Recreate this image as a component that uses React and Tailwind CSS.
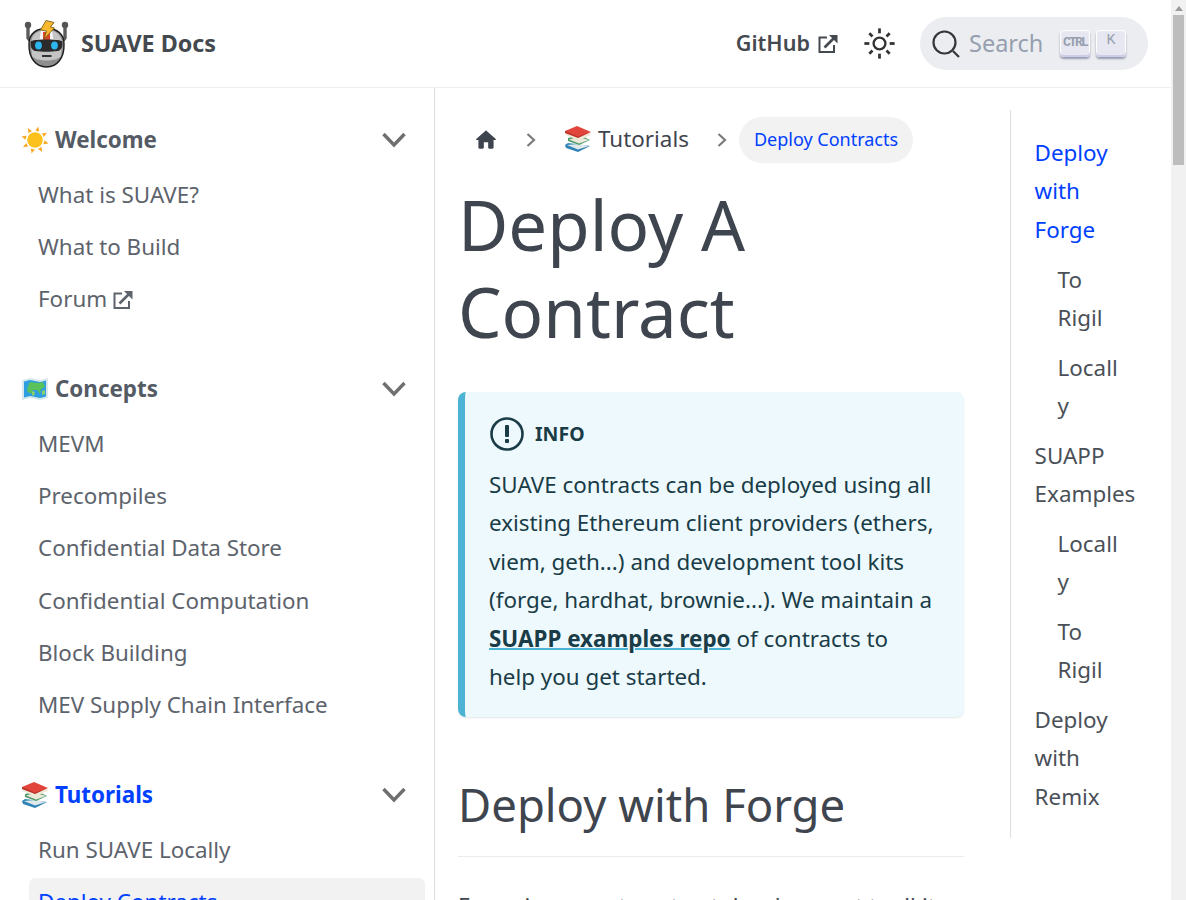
const sections = [
  { title: "Welcome", icon: <SunEmoji />, items: ["What is SUAVE?", "What to Build", "Forum"] },
  {
    title: "Concepts",
    icon: <MapEmoji />,
    items: ["MEVM", "Precompiles", "Confidential Data Store", "Confidential Computation", "Block Building", "MEV Supply Chain Interface"],
  },
  { title: "Tutorials", icon: <BooksEmoji />, active: true, items: ["Run SUAVE Locally", "Deploy Contracts"] },
];

function SunEmoji() {
  const rays = [0, 45, 90, 135, 180, 225, 270, 315];
  return (
    <svg width="28" height="28" viewBox="0 0 28 28">
      {rays.map((r) => (
        <path key={r} d="M12 4.8 L14 0 L16 4.8Z" fill="#f8a825" transform={`rotate(${r + 14} 14 14)`} />
      ))}
      <circle cx="14" cy="14" r="7.8" fill="#fdc11e" />
    </svg>
  );
}

function MapEmoji() {
  return (
    <svg width="28" height="28" viewBox="0 0 28 28">
      <path d="M1 5 L9 3 L19 5 L27 3 L27 23 L19 25 L9 23 L1 25Z" fill="#d7e8ee" />
      <path d="M3 6.5 L9 5 L19 7 L25 5.5 L25 21.5 L19 23 L9 21 L3 22.5Z" fill="#2f9ee0" />
      <path d="M9 7 L17 8 L22 7 L24 12 L20 14 L19 19 L16 15 L12 15 L10 19 L6 16 L7 11Z" fill="#59c25a" />
      <path d="M11 16 L14 17 L13 21 L11 20Z M21 16 L24 15 L24 19 L21 20Z" fill="#8bd06a" />
    </svg>
  );
}

function BooksEmoji() {
  return (
    <svg width="28" height="28" viewBox="0 0 28 28">
      <path d="M1 20 L4 18 L26 21 L14 27 L2 23Z" fill="#2f84b5" />
      <path d="M3 20 L14 24.5 L25 21 L14 19Z" fill="#dfe9ea" />
      <path d="M4 13 L16 10 L26 15 L15 20 L4 16Z" fill="#4f9d6b" />
      <path d="M5 14.5 L15 18.5 L25 15 L15 12Z" fill="#ece8da" />
      <path d="M1 6 L13 1 L27 7 L14 13 L2 9Z" fill="#e2453b" />
      <path d="M1.5 7.5 L14 12.5 L26.5 7.5 L26.5 10 L14 15.5 L1.5 10Z" fill="#f0e9d8" />
      <path d="M1 6 L14 11.5 L27 7 L14 13 L1 8Z" fill="#b9352d" />
    </svg>
  );
}

function ExternalIcon({ size = 20 }) {
  return (
    <svg width={size} height={size} viewBox="0 0 20 20" fill="none" stroke="currentColor">
      <path d="M9 3.5 H1.5 V18 H16 V11" strokeWidth="2" />
      <path d="M6.5 13.5 L17 3" strokeWidth="2.6" />
      <path d="M11 1 H19.5 V9.5Z" fill="currentColor" stroke="none" />
    </svg>
  );
}

function RobotLogo() {
  return (
    <svg width="46" height="48" viewBox="0 0 46 48">
      <path d="M4 6 L4 18 L8 23 M41 6 L41 18 L37 23" fill="none" stroke="#5c5c5c" strokeWidth="3.4" />
      <circle cx="4" cy="5" r="3.2" fill="#555" />
      <circle cx="41" cy="5" r="3.2" fill="#555" />
      <path d="M5 24 C5 13 13 8.5 22.5 8.5 C32 8.5 40 13 40 24 C40.5 38 33 47 22.5 47 C12 47 4.5 38 5 24Z" fill="#8f8f8f" stroke="#1d1d1d" strokeWidth="1.4" />
      <path d="M7 24 C7 14 14 10 22.5 10 C31 10 38 14 38 24 L37 36 C33 42 12 42 8 36Z" fill="#c4c4c4" />
      <path d="M17 10 H28 L29.5 20 H15.5Z" fill="#f5f5f5" />
      <path d="M19 12 H26 L26 20 H19Z" fill="#d9432a" />
      <path d="M7 21 C13 19 32 19 38 21 C39 25 38 30 34 31 C27 32 18 32 11 31 C7 30 6 25 7 21Z" fill="#2b2b2b" />
      <ellipse cx="14.5" cy="25.5" rx="3.4" ry="4" fill="#2cb6f0" />
      <ellipse cx="30.5" cy="25.5" rx="3.4" ry="4" fill="#2cb6f0" />
      <rect x="18" y="35" width="9.5" height="2" fill="#333" />
      <path d="M22 0.5 L30 2.5 L26.5 7 L30.5 8 L20 19 L22.5 11 L16.5 10Z" fill="#f9b92e" stroke="#7b5e16" strokeWidth="0.9" />
    </svg>
  );
}

function SidebarSection({ section }) {
  return (
    <div className="mb-[39.6px]">
      <div className="flex h-[52px] items-center justify-between pl-[21px] pr-[28px]">
        <div className={`flex items-center gap-[6px] text-[22.4px] font-bold ${section.active ? "text-[#0040ff]" : "text-[#555b65]"}`}>
          {section.icon}
          {section.title}
        </div>
        <svg width="24" height="16" viewBox="0 0 24 16" fill="none" stroke="#6f6f6f" strokeWidth="3.4">
          <path d="M1.5 2 L12 13 L22.5 2" />
        </svg>
      </div>
      <div className="mt-[5px] flex flex-col gap-[4.25px] pl-[29px] pr-[9px]">
        {section.items.map((item) => (
          <div
            key={item}
            className={`flex h-12 shrink-0 items-center gap-[6px] rounded-md px-[9px] ${
              item === "Deploy Contracts" ? "bg-[#f2f2f2] text-[#0040ff]" : "text-[#5d636c]"
            }`}
          >
            {item}
            {item === "Forum" && <ExternalIcon />}
          </div>
        ))}
      </div>
    </div>
  );
}

function TocItem({ children, active, nested }) {
  return <div className={`mb-[11.3px] ${nested ? "pl-[23px]" : ""} ${active ? "text-[#0040ff]" : "text-[#4a5058]"}`}>{children}</div>;
}

export default function App() {
  return (
    <div className="flex h-[900px] overflow-hidden bg-white font-['Noto_Sans',sans-serif] text-[22.4px] leading-[38.3px] text-[#3f454e]">
      <div className="flex w-[1171px] shrink-0 flex-col">
        <header className="flex h-[88px] shrink-0 items-center border-b border-[#efefef] pl-[24px] pr-[23px]">
          <RobotLogo />
          <span className="ml-[11px] text-[23.3px] font-bold text-[#444950]">SUAVE Docs</span>
          <div className="ml-auto flex items-center">
            <span className="text-[21.6px] font-semibold text-[#444950]">GitHub</span>
            <span className="ml-[8px] text-[#444950]">
              <ExternalIcon />
            </span>
            <svg className="ml-[25px]" width="33" height="33" viewBox="0 0 24 24" fill="#333">
              <circle cx="12" cy="12" r="4.3" fill="none" stroke="#333" strokeWidth="1.7" />
              <rect x="11" y="1" width="2" height="3.6" />
              <rect x="11" y="19.4" width="2" height="3.6" />
              <rect x="1" y="11" width="3.6" height="2" />
              <rect x="19.4" y="11" width="3.6" height="2" />
              <path d="M3.9 5.3 L5.3 3.9 L7.6 6.2 L6.2 7.6Z M18.7 20.1 L20.1 18.7 L17.8 16.4 L16.4 17.8Z M20.1 5.3 L18.7 3.9 L16.4 6.2 L17.8 7.6Z M5.3 20.1 L3.9 18.7 L6.2 16.4 L7.6 17.8Z" />
            </svg>
            <div className="ml-[24px] flex h-[53px] w-[228px] items-center rounded-full bg-[#ebedf0] pl-[12px]">
              <svg width="28" height="28" viewBox="0 0 28 28" fill="none" stroke="#33363a" strokeWidth="2.2">
                <circle cx="12.5" cy="12.5" r="11" />
                <path d="M21 21 L27 27" />
              </svg>
              <span className="ml-[9px] w-[91px] text-[23.5px] text-[#969faf]">Search</span>
              <kbd className="flex h-[27px] w-[30px] items-center justify-center rounded-[4px] bg-[#e6e7f0] font-['Liberation_Mono',monospace] text-[13px] font-bold tracking-[-1.8px] text-[#969faf] shadow-[inset_0_-2px_0_#cdcde6,inset_0_0_1px_1px_#fff,0_2px_2px_rgba(30,35,90,0.4)]">
                CTRL
              </kbd>
              <kbd className="ml-[6px] flex h-[27px] w-[30px] items-start justify-center rounded-[4px] bg-[#e6e7f0] text-[15px] leading-[22px] text-[#969faf] shadow-[inset_0_-2px_0_#cdcde6,inset_0_0_1px_1px_#fff,0_2px_2px_rgba(30,35,90,0.4)]">
                K
              </kbd>
            </div>
          </div>
        </header>

        <div className="flex min-h-0 flex-1">
          <aside className="w-[435px] shrink-0 overflow-hidden border-r border-[#dadde1] pt-[26px]">
            {sections.map((s) => (
              <SidebarSection key={s.title} section={s} />
            ))}
          </aside>

          <main className="w-[575px] shrink-0 overflow-hidden pl-[23px] pr-[46px] pt-[29px]">
            <nav className="flex h-[46px] items-center">
              <svg className="ml-[15px]" width="26" height="26" viewBox="0 0 24 24" fill="#3f454e">
                <path d="M10 19v-5h4v5c0 .55.45 1 1 1h3c.55 0 1-.45 1-1v-7h1.7c.46 0 .68-.57.33-.87L12.67 3.6c-.38-.34-.96-.34-1.34 0l-8.36 7.53c-.34.3-.13.87.33.87H5v7c0 .55.45 1 1 1h3c.55 0 1-.45 1-1z" />
              </svg>
              <svg className="ml-[27px]" width="10" height="16" viewBox="0 0 10 16" fill="none" stroke="#7a7a7a" strokeWidth="2.2">
                <path d="M1.5 2 L8 8 L1.5 14" />
              </svg>
              <span className="ml-[28px] flex items-center gap-[6px] pb-[2px]">
                <BooksEmoji />
                Tutorials
              </span>
              <svg className="ml-[28px]" width="10" height="16" viewBox="0 0 10 16" fill="none" stroke="#7a7a7a" strokeWidth="2.2">
                <path d="M1.5 2 L8 8 L1.5 14" />
              </svg>
              <span className="ml-[12px] flex h-[46px] items-center rounded-full bg-[#f2f2f2] px-[15px] pb-[2px] text-[18px] text-[#0040ff]">
                Deploy Contracts
              </span>
            </nav>

            <h1 className="mt-[18px] text-[69px] leading-[87px] text-[#3f454e]">
              Deploy A
              <br />
              Contract
            </h1>

            <div className="mt-[37px] rounded-lg border-l-[7px] border-[#4cb3d4] bg-[#eef9fd] pb-[21px] pl-[24px] pr-[16px] pt-[22px] text-[#193c47] shadow-[0_1px_2px_0_rgba(0,0,0,0.1)]">
              <div className="flex h-[40px] items-center gap-[10px] text-[19.5px] font-bold">
                <svg width="36" height="36" viewBox="0 0 36 36" fill="none" stroke="#193c47" strokeWidth="2.6">
                  <circle cx="18" cy="18" r="15.5" />
                  <rect x="16" y="9" width="4" height="12" fill="#193c47" stroke="none" rx="1" />
                  <rect x="16" y="23" width="4" height="4" fill="#193c47" stroke="none" rx="1" />
                </svg>
                INFO
              </div>
              <p className="mt-[12px] leading-[38.4px]">
                SUAVE contracts can be deployed using all
                <br />
                existing Ethereum client providers (ethers,
                <br />
                viem, geth...) and development tool kits
                <br />
                (forge, hardhat, brownie...). We maintain a
                <br />
                <a className="font-bold underline decoration-[#4cb3d4] decoration-2">SUAPP examples repo</a> of contracts to
                <br />
                help you get started.
              </p>
            </div>

            <h2 className="mt-[56px] text-[45.5px] leading-[62px] text-[#3f454e]">Deploy with Forge</h2>
            <div className="mt-[21px] border-b border-[#ebebeb]" />
            <p className="mt-[30px]">Forge is a smart contract development toolkit</p>
          </main>

          <div className="min-w-0 flex-1 pt-[22px]">
            <div className="h-[728px] border-l border-[#dadde1] pl-[23.6px] pt-[24px] leading-[38.4px]">
              <TocItem active>
                Deploy
                <br />
                with
                <br />
                Forge
              </TocItem>
              <TocItem nested>
                To
                <br />
                Rigil
              </TocItem>
              <TocItem nested>
                Locall
                <br />y
              </TocItem>
              <TocItem>
                SUAPP
                <br />
                Examples
              </TocItem>
              <TocItem nested>
                Locall
                <br />y
              </TocItem>
              <TocItem nested>
                To
                <br />
                Rigil
              </TocItem>
              <TocItem>
                Deploy
                <br />
                with
                <br />
                Remix
              </TocItem>
            </div>
          </div>
        </div>
      </div>

      {/* page scrollbar */}
      <div className="flex w-[15px] shrink-0 flex-col items-center bg-[#f1f1f1]">
        <svg className="mt-[6px]" width="8" height="5" viewBox="0 0 8 5" fill="#9a9a9a">
          <path d="M4 0 L8 5 H0Z" />
        </svg>
        <div className="mt-[4px] h-[150px] w-[11px] bg-[#bdbdbd]" />
      </div>
    </div>
  );
}
